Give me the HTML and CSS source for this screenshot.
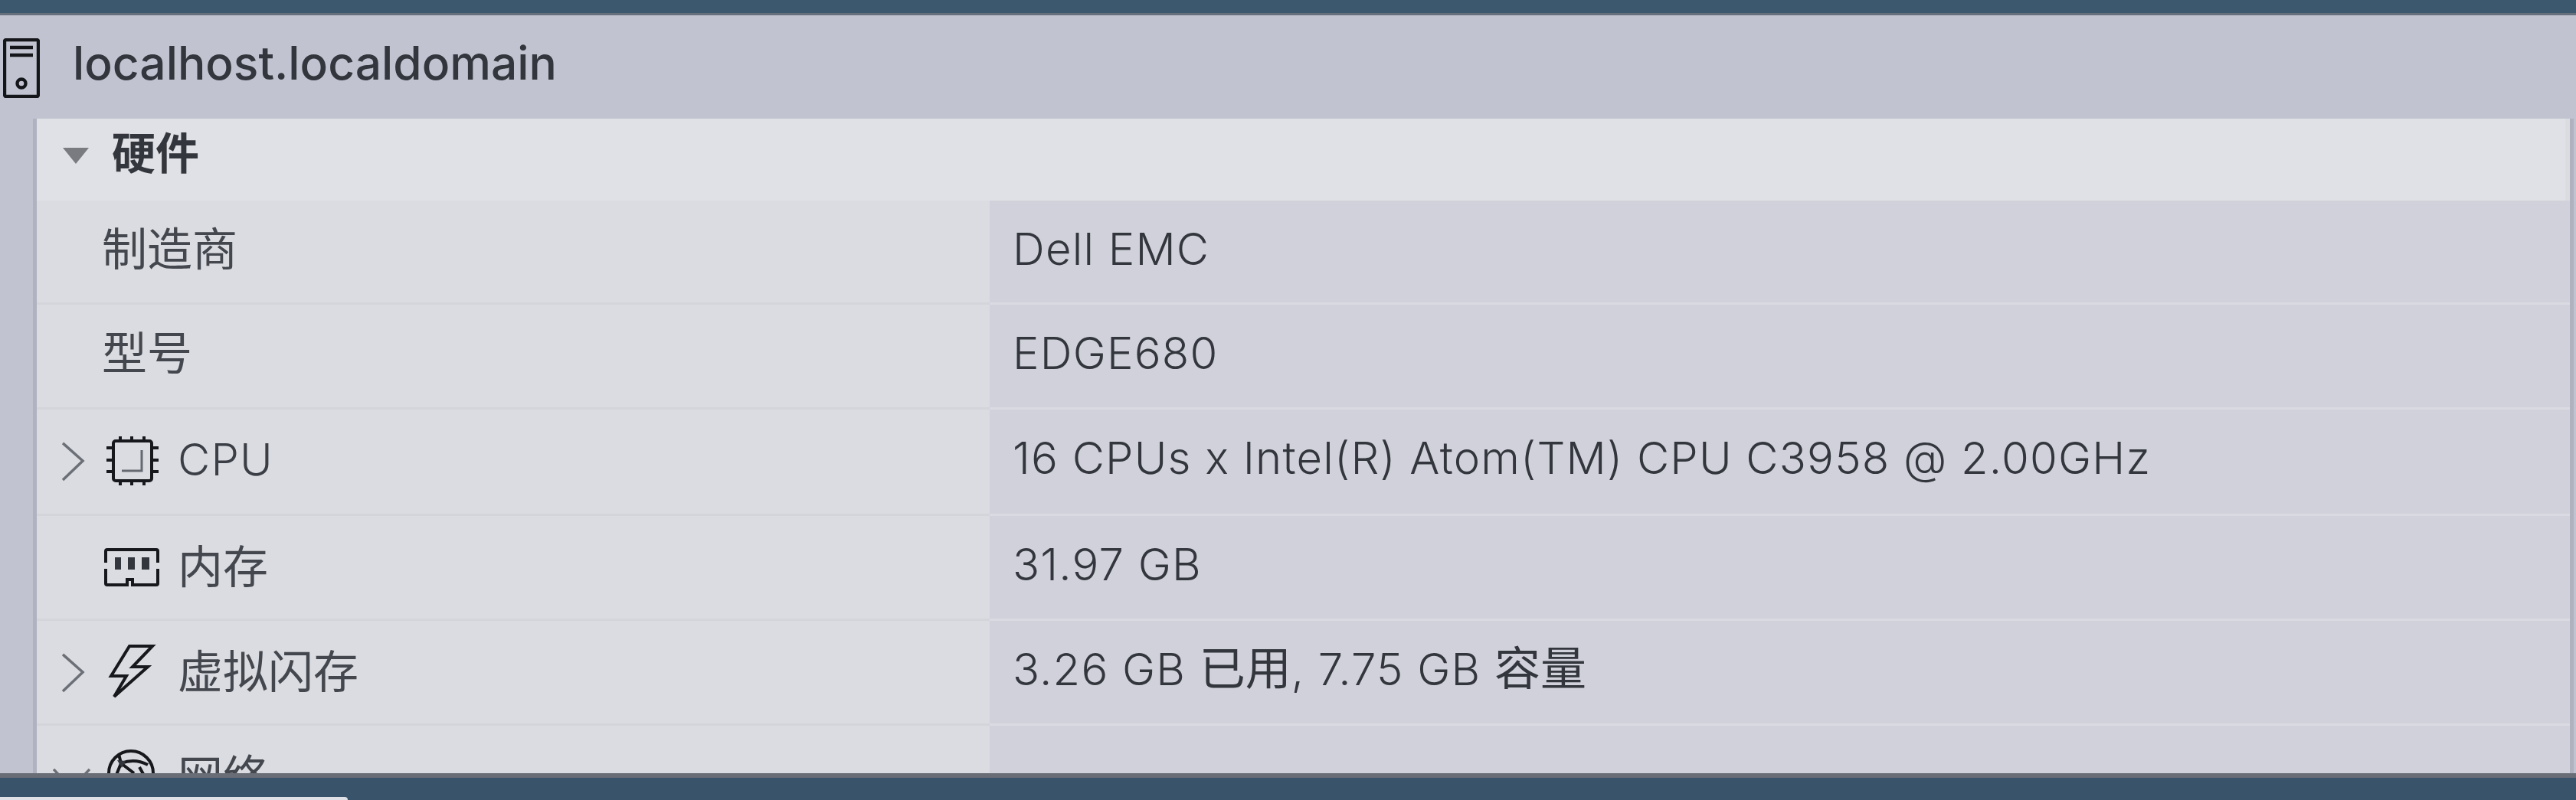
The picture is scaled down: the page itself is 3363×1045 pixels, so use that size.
FILE: index.html
```html
<!DOCTYPE html>
<html lang="zh">
<head>
<meta charset="utf-8">
<title>localhost.localdomain</title>
<link rel="stylesheet" href="styles.css">
</head>
<body>
<div class="page">
  <div class="topbar"></div>
  <header class="host">
    <svg class="host-icon" viewBox="0 0 48 78" aria-hidden="true">
      <rect x="2" y="2" width="44" height="74" rx="2"/>
      <path d="M9 12H39M9 22H39"/>
      <circle cx="24" cy="59" r="5.5"/>
    </svg>
    <h1 class="host-name">localhost.localdomain</h1>
  </header>
  <main class="body">
    <section class="panel">
      <div class="panel-head">
        <span class="caret"></span>
        <h2 class="panel-title">硬件</h2>
      </div>
      <div class="row">
        <div class="label label-plain">制造商</div>
        <div class="value">Dell EMC</div>
      </div>
      <div class="row">
        <div class="label label-plain">型号</div>
        <div class="value">EDGE680</div>
      </div>
      <div class="row">
        <div class="label">
          <svg class="chev" viewBox="0 0 32 56"><path d="M2 3L29 27L2 53"/></svg>
          <svg class="ico ico-cpu" viewBox="0 0 70 66">
            <rect x="10" y="7" width="50" height="52" rx="3"/>
            <path d="M19 1V7M34 1V7M50 1V7M19 59V65M34 59V65M50 59V65M1 16H10M1 32H10M1 47H10M60 16H69M60 32H69M60 47H69"/>
            <path class="ico-soft" d="M21 46H47V19"/>
          </svg>
          <span class="label-text label-latin">CPU</span>
        </div>
        <div class="value">16 CPUs x Intel(R) Atom(TM) CPU C3958 @ 2.00GHz</div>
      </div>
      <div class="row">
        <div class="label">
          <svg class="ico ico-mem" viewBox="0 0 72 52">
            <path d="M2 20V5Q2 3 4 3H68Q70 3 70 5V20M70 28V47Q70 49 68 49H37V42H30V49H4Q2 49 2 47V28"/>
            <path class="ico-fill" d="M14 13H22V29H14ZM31 13H40V29H31ZM49 13H59V29H49Z"/>
          </svg>
          <span class="label-text">内存</span>
        </div>
        <div class="value">31.97 GB</div>
      </div>
      <div class="row">
        <div class="label">
          <svg class="chev" viewBox="0 0 32 56"><path d="M2 3L29 27L2 53"/></svg>
          <svg class="ico ico-flash" viewBox="0 0 70 72">
            <path d="M30 3H60L34 30H54L10 69L26 42H6Z"/>
          </svg>
          <span class="label-text">虚拟闪存</span>
        </div>
        <div class="value">3.26 GB <span class="cjk">已用</span>, 7.75 GB <span class="cjk">容量</span></div>
      </div>
      <div class="row">
        <div class="label">
          <svg class="chev chev-down" viewBox="0 0 56 32"><path d="M3 2L28 29L53 2"/></svg>
          <svg class="ico ico-net" viewBox="0 0 66 66">
            <circle cx="33" cy="33" r="29"/>
            <path d="M20 20Q38 13 55 22M20 20L14 35M20 20L37 33M20 20L17 8M49 34L44 25"/>
            <path class="ico-fill" d="M15 16L26 17L21 26Z"/>
          </svg>
          <span class="label-text">网络</span>
        </div>
        <div class="value"></div>
      </div>
    </section>
  </main>
  <footer class="bottombar"><div class="tab-edge"></div></footer>
</div>
</body>
</html>
```
FILE: styles.css
```css
* { box-sizing: border-box; }
html, body { margin: 0; padding: 0; height: 100%; overflow: hidden; }
body { font-family: "Inter", "Noto Sans CJK SC", sans-serif; color: #33363d; }
.page { width: 3363px; height: 1045px; display: flex; flex-direction: column; background: #c1c4d0; overflow: hidden; }

.topbar { flex: 0 0 20px; background: #3b586e; border-bottom: 3px solid #66707c; }

.host { flex: 0 0 135px; display: flex; align-items: flex-start; padding: 30px 0 0 4px; }
.host-icon { width: 48px; height: 78px; flex: none; fill: none; stroke: #14161a; stroke-width: 4.4; }
.host-name { margin: -8px 0 0 43px; font-size: 60.5px; line-height: 80px; font-weight: 500; color: #33363c; white-space: nowrap; }

.body { flex: 1 1 0; min-height: 0; overflow: hidden; padding-left: 43px; padding-right: 3px; }
.panel { border-left: 5px solid #b0b2c0; border-right: 5px solid #b0b2c0; background: #dadce2; }

.panel-head { height: 107px; margin-right: 6px; display: flex; align-items: flex-start; background: #e0e1e6; padding: 15px 0 0 34px; }
.caret { margin-top: 23px; width: 0; height: 0; border-left: 17px solid transparent; border-right: 17px solid transparent; border-top: 21px solid #797b81; flex: none; }
.panel-title { margin: -14px 0 0 30px; font-family: "Noto Sans CJK SC", sans-serif; font-size: 57px; line-height: 80px; font-weight: 700; color: #33363c; }

.row { display: grid; grid-template-columns: 1244px 1fr; height: 137px; }
.row:nth-of-type(2) { height: 136px; }
.row:nth-of-type(4) { height: 139px; }

.label { display: grid; grid-template-columns: 90px 94px 1fr; align-items: start; background: #dadce2; padding-top: 23px; border-bottom: 3px solid #d3d5db; font-family: "Noto Sans CJK SC", sans-serif; font-size: 59px; line-height: 80px; font-weight: 400; color: #44474e; }
.label-plain { display: block; padding-left: 85px; padding-top: 20px; }
.value { background: #d0d1da; border-bottom: 3px solid #dadbe2; padding: 23px 0 0 30px; font-size: 58px; letter-spacing: 1.2px; line-height: 80px; font-weight: 300; white-space: nowrap; }
.cjk { font-family: "Noto Sans CJK SC", sans-serif; font-size: 60px; font-weight: 400; letter-spacing: 0; line-height: 1; }

.chev { grid-column: 1; width: 31px; height: 54px; margin: 18px 0 0 32px; fill: none; stroke: #6c6f76; stroke-width: 3.6; }
.chev-down { width: 53px; height: 30px; margin: 32px 0 0 19px; }

.ico { grid-column: 2; display: block; fill: none; stroke: #16181c; stroke-width: 4; }
.ico-cpu { width: 70px; height: 66px; margin-top: 11px; }
.ico-mem { width: 72px; height: 52px; margin: 18px 0 0 -2px; }
.ico-flash { width: 70px; height: 72px; margin: 7px 0 0 1px; }
.ico-net { width: 66px; height: 66px; margin-top: 6px; }
.ico-soft { stroke: #666970; stroke-width: 3; }
.ico-fill { fill: #33363c; stroke: none; }

.label-text { grid-column: 3; white-space: nowrap; }
.label-latin { font-family: "Inter", sans-serif; font-weight: 300; font-size: 58px; letter-spacing: 1.2px; color: #3b3e45; padding-top: 2px; }

.bottombar { flex: 0 0 35px; background: #39546a; border-top: 6px solid #686d76; position: relative; }
.tab-edge { position: absolute; left: 0; bottom: 0; width: 454px; height: 4px; background: #dfe1e6; border-radius: 0 6px 0 0; }
```
